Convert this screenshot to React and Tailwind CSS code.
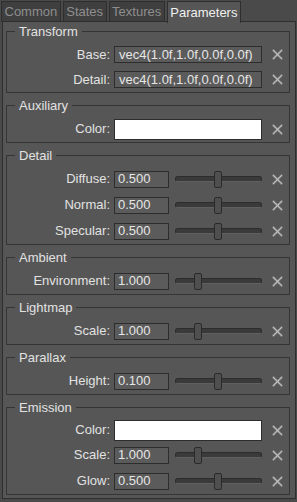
import React from 'react';

const font = { fontFamily: '"Liberation Sans", Arial, sans-serif' };

const ClearIcon = () => (
    <svg width="11" height="11" viewBox="0 0 11 11" className="shrink-0">
        <path d="M1.5 1.5 L9.5 9.5 M9.5 1.5 L1.5 9.5" stroke="#6a6a6a" strokeWidth="2.8" strokeLinecap="square" />
        <path d="M1.5 1.5 L9.5 9.5 M9.5 1.5 L1.5 9.5" stroke="#bdbdbd" strokeWidth="1.3" strokeLinecap="square" strokeDasharray="1.4 0.6" />
    </svg>
);

const Slider = ({ pos }) => (
    <div className="relative ml-[6px] w-[87px] h-[17px] flex items-center">
        <div className="w-full h-[6px] rounded-full bg-[#3a3a3a] border border-[#2c2c2c] border-b-[#606060]" />
        <div
            className="absolute top-0 w-[8px] h-[17px] rounded-[2px] bg-[#4f4f4f] border border-[#2a2a2a]"
            style={{ left: pos }}
        />
    </div>
);

const Row = ({ label, children, h = 'h-[26px]' }) => (
    <div className={`flex items-center ${h}`}>
        <div className="w-[107px] pr-[4px] text-right text-[13px] text-[#e2e2e2] whitespace-nowrap">{label}</div>
        {children}
        <div className="ml-[10px] flex items-center">
            <ClearIcon />
        </div>
    </div>
);

const TextField = ({ value }) => (
    <div className="w-[148px] h-[17px] flex items-center px-[4px] bg-[#5b5b5b] border border-[#2d2d2d] text-[13px] text-[#e6e6e6] whitespace-nowrap overflow-hidden">
        {value}
    </div>
);

const ColorField = () => <div className="w-[148px] h-[21px] bg-white border border-[#2d2d2d]" />;

const NumberRow = ({ label, value, pos }) => (
    <Row label={label}>
        <div className="w-[55px] h-[17px] flex items-center px-[3px] bg-[#5b5b5b] border border-[#2d2d2d] text-[13px] text-[#e6e6e6]">
            {value}
        </div>
        <Slider pos={pos} />
    </Row>
);

const Group = ({ title, children }) => (
    <fieldset className="ml-[3px] mr-[5px] border border-[#353535] pt-[3px] pb-0 min-w-0">
        <legend className="ml-[8px] px-[4px] text-[13px] leading-[15px] text-[#e2e2e2]">{title}</legend>
        {children}
    </fieldset>
);

const tabs = ['Common', 'States', 'Textures', 'Parameters'];

export default function App() {
    return (
        <div className="w-[297px] h-[502px] bg-[#4a4a4a] overflow-hidden" style={font}>
            <div className="flex h-[22px] pt-[1px] pl-[1px] gap-[2px]">
                {tabs.map((t) =>
                    t === 'Parameters' ? (
                        <div
                            key={t}
                            className="relative z-10 h-[22px] px-[2.5px] flex items-center bg-[#565656] border border-b-0 border-[#2e2e2e] text-[13px] text-[#f0f0f0]"
                        >
                            {t}
                        </div>
                    ) : (
                        <div
                            key={t}
                            className="h-[21px] px-[2.5px] flex items-center bg-[#3f3f3f] border border-[#2e2e2e] text-[13px] text-[#8e8e8e]"
                        >
                            {t}
                        </div>
                    )
                )}
            </div>
            <div className="ml-[2px] w-[294px] h-[478px] -mt-[1px] bg-[#565656] border border-[#2e2e2e] pt-[2px] flex flex-col gap-[5px]">
                <Group title="Transform">
                    <Row label="Base:" h="h-[25px]">
                        <TextField value="vec4(1.0f,1.0f,0.0f,0.0f)" />
                    </Row>
                    <Row label="Detail:" h="h-[25px]">
                        <TextField value="vec4(1.0f,1.0f,0.0f,0.0f)" />
                    </Row>
                </Group>
                <Group title="Auxiliary">
                    <Row label="Color:">
                        <ColorField />
                    </Row>
                </Group>
                <Group title="Detail">
                    <NumberRow label="Diffuse:" value="0.500" pos={39} />
                    <NumberRow label="Normal:" value="0.500" pos={39} />
                    <NumberRow label="Specular:" value="0.500" pos={39} />
                </Group>
                <Group title="Ambient">
                    <NumberRow label="Environment:" value="1.000" pos={19} />
                </Group>
                <Group title="Lightmap">
                    <NumberRow label="Scale:" value="1.000" pos={19} />
                </Group>
                <Group title="Parallax">
                    <NumberRow label="Height:" value="0.100" pos={39} />
                </Group>
                <Group title="Emission">
                    <Row label="Color:" h="h-[24px]">
                        <ColorField />
                    </Row>
                    <NumberRow label="Scale:" value="1.000" pos={19} />
                    <NumberRow label="Glow:" value="0.500" pos={39} />
                </Group>
            </div>
        </div>
    );
}
